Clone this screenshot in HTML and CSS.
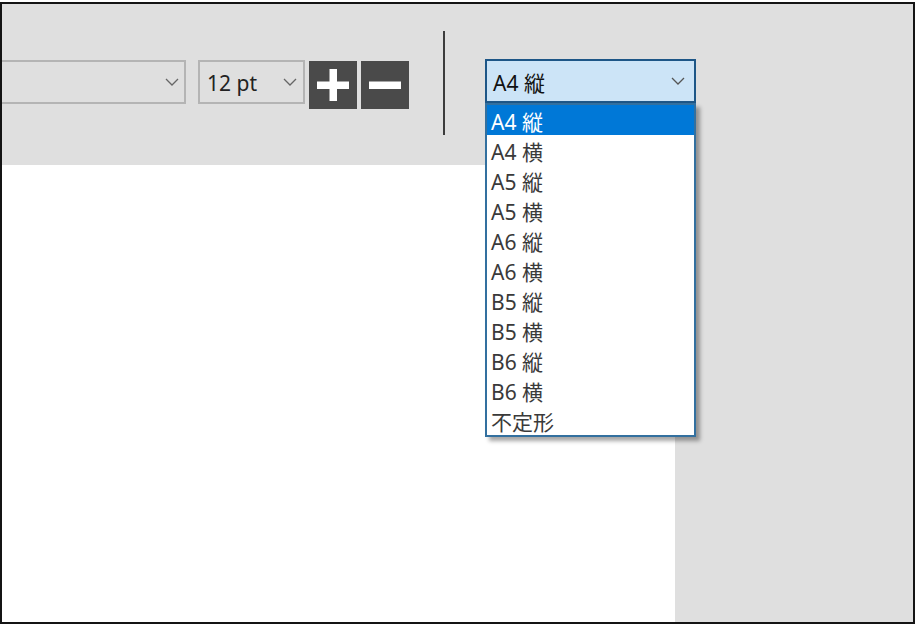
FILE: index.html
```html
<!DOCTYPE html>
<html lang="ja">
<head>
    <meta charset="UTF-8">
    <title>用紙サイズ</title>
    <link rel="stylesheet" href="styles.css">
</head>
<body>
    <div class="window">
        <div class="toolbar">
            <div class="sel font-sel">
                <span class="sel-text"></span>
                <svg class="chev" width="14" height="8" viewBox="0 0 14 8"><polyline points="1,1 7,7 13,1" fill="none" stroke="#666" stroke-width="1.3"/></svg>
            </div>
            <div class="sel size-sel">
                <span class="sel-text">12 pt</span>
                <svg class="chev" width="14" height="8" viewBox="0 0 14 8"><polyline points="1,1 7,7 13,1" fill="none" stroke="#666" stroke-width="1.3"/></svg>
            </div>
            <button class="btn" type="button" aria-label="大きく">
                <svg width="32" height="32" viewBox="0 0 32 32"><rect x="0" y="12.5" width="32" height="7.5" fill="#fff"/><rect x="12.5" y="0" width="7.5" height="32" fill="#fff"/></svg>
            </button>
            <button class="btn" type="button" aria-label="小さく">
                <svg width="32" height="32" viewBox="0 0 32 32"><rect x="0" y="12.5" width="32" height="7.5" fill="#fff"/></svg>
            </button>
            <div class="sep"></div>
            <div class="paper">
                <div class="sel paper-sel">
                    <span class="sel-text">A4 縦</span>
                    <svg class="chev" width="14" height="8" viewBox="0 0 14 8"><polyline points="1,1 7,7 13,1" fill="none" stroke="#555" stroke-width="1.3"/></svg>
                </div>
                <ul class="list">
                    <li class="on">A4 縦</li>
                    <li>A4 横</li>
                    <li>A5 縦</li>
                    <li>A5 横</li>
                    <li>A6 縦</li>
                    <li>A6 横</li>
                    <li>B5 縦</li>
                    <li>B5 横</li>
                    <li>B6 縦</li>
                    <li>B6 横</li>
                    <li>不定形</li>
                </ul>
            </div>
        </div>
        <div class="main">
            <div class="page"></div>
            <div class="side"></div>
        </div>
    </div>
</body>
</html>
```

FILE: styles.css
```css
body {
    margin: 0;
    background-color: #fff;
    font-family: "Noto Sans", "Noto Sans CJK JP", sans-serif;
}
.window {
    margin-top: 2px;
    width: 915px;
    height: 622px;
    box-sizing: border-box;
    border: 2px solid #141414;
    display: flex;
    flex-direction: column;
    overflow: hidden;
}
.toolbar {
    height: 161px;
    flex-shrink: 0;
    background-color: #dfdfdf;
    display: flex;
    align-items: flex-start;
}
.sel {
    box-sizing: border-box;
    height: 44px;
    margin-top: 56px;
    border: 2px solid #b4b4b4;
    display: flex;
    align-items: center;
    justify-content: space-between;
    padding: 0 9px 0 7px;
    font-size: 21px;
    color: #222;
}
.sel-text {
    padding-top: 2px;
}
.font-sel {
    width: 184px;
    border-left: none;
    padding-right: 5px;
}
.size-sel {
    width: 107px;
    margin-left: 12px;
    padding-right: 6px;
}
.btn {
    width: 48px;
    height: 48px;
    margin-top: 57px;
    margin-left: 4px;
    padding: 0;
    border: none;
    background-color: #4a4a4a;
    display: flex;
    align-items: center;
    justify-content: center;
}
.sep {
    width: 2px;
    height: 104px;
    margin-top: 27px;
    margin-left: 34px;
    background-color: #3c3c3c;
}
.paper {
    position: relative;
    margin-left: 40px;
    margin-top: 55px;
}
.paper-sel {
    width: 211px;
    margin-top: 0;
    border: 2px solid #1d5687;
    background-color: #cce4f7;
    color: #111;
    padding-left: 6px;
    padding-right: 9px;
}
.list {
    position: absolute;
    left: 0;
    top: 44px;
    width: 211px;
    box-sizing: border-box;
    margin: 0;
    padding: 0;
    list-style: none;
    background-color: #fff;
    border: 2px solid #33709f;
    box-shadow: 4px 4px 4px rgba(0, 0, 0, 0.35);
    font-size: 21px;
    color: #3a3a3a;
}
.list li {
    height: 30px;
    box-sizing: border-box;
    padding: 5px 0 0 4px;
    line-height: 25px;
}
.list li.on {
    background-color: #0078d7;
    color: #fff;
}
.main {
    flex: 1;
    display: flex;
}
.page {
    width: 673px;
    background-color: #fff;
}
.side {
    flex: 1;
    background-color: #dfdfdf;
}
```
